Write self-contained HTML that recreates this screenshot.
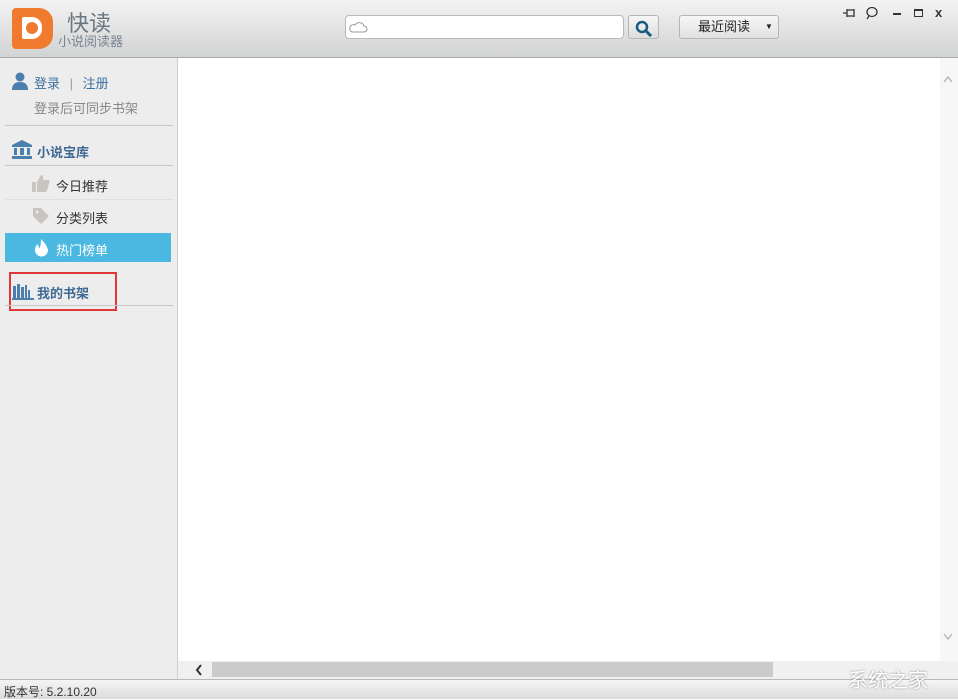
<!DOCTYPE html><html><head><meta charset="utf-8"><style>
*{margin:0;padding:0;box-sizing:border-box}
body{width:958px;height:699px;overflow:hidden;position:relative;font-family:"Liberation Sans","Noto Sans CJK SC",sans-serif;font-size:12px;background:#fff}
.a{position:absolute}
#hd{left:0;top:0;width:958px;height:58px;background:linear-gradient(#f3f3f3,#d2d3d4);border-bottom:1px solid #a9abad}
#sb{left:0;top:58px;width:178px;height:621px;background:#ededed;border-right:1px solid #cfcfcf}
.ln{height:1px;background:#c8c8c8;left:5px;width:168px}
.t{color:#333;font-size:13px}
</style></head><body>
<div id="hd" class="a">
 <div class="a" style="left:12px;top:8px;width:41px;height:41px;background:#f07a2e;border-radius:4px 14px 14px 4px"></div>
 <div class="a" style="left:22px;top:17px;width:20px;height:22px;background:#fff;border-radius:2px 10px 10px 2px"></div>
 <div class="a" style="left:26px;top:22px;width:12px;height:12px;background:#f07a2e;border-radius:50%"></div>
 <div class="a" style="left:67px;top:6px;font-size:22px;color:#6b7780">快读</div>
 <div class="a" style="left:58px;top:31px;font-size:13px;color:#7a8590">小说阅读器</div>
 <div class="a" style="left:345px;top:15px;width:279px;height:24px;background:#fff;border:1px solid #b9b9b9;border-radius:4px"></div>
 <svg class="a" style="left:348px;top:20px" width="20" height="14"><path d="M4 12h12a3 3 0 0 0 0-6a5 5 0 0 0-9-1a3.5 3.5 0 0 0-3 7z" fill="none" stroke="#999"/></svg>
 <div class="a" style="left:628px;top:15px;width:31px;height:24px;background:linear-gradient(#f7f7f7,#ddd);border:1px solid #b5b5b5;border-radius:3px"></div>
 <svg class="a" style="left:634px;top:19px" width="20" height="18"><circle cx="8" cy="8" r="5" fill="none" stroke="#1a5a82" stroke-width="2.5"/><path d="M12 12l5 5" stroke="#1a5a82" stroke-width="3"/></svg>
 <div class="a" style="left:679px;top:15px;width:100px;height:24px;background:linear-gradient(#f7f7f7,#e0e0e0);border:1px solid #b5b5b5;border-radius:3px;font-size:13px;color:#222;line-height:22px;padding-left:18px">最近阅读<span style="position:absolute;left:85px;font-size:8px">▼</span></div>
 <svg class="a" style="left:842px;top:7px" width="14" height="12"><path d="M1 6h4M5 2v8M5 3h7v6H5M12 2v8" fill="none" stroke="#333" stroke-width="1.3"/></svg>
 <svg class="a" style="left:865px;top:6px" width="14" height="14"><ellipse cx="7" cy="6" rx="5" ry="4.5" fill="none" stroke="#333" stroke-width="1.3"/><path d="M4 10l-2 3" stroke="#333" stroke-width="1.3"/></svg>
 <div class="a" style="left:893px;top:13px;width:8px;height:2px;background:#333"></div>
 <div class="a" style="left:914px;top:9px;width:9px;height:8px;border:1.5px solid #333;border-top-width:2.5px"></div>
 <div class="a" style="left:935px;top:5px;font-size:13px;font-weight:bold;color:#333">x</div>
</div>
<div id="sb" class="a"></div>
<svg class="a" style="left:12px;top:72px" width="16" height="18"><circle cx="8" cy="5" r="4.5" fill="#4a7fae"/><path d="M0 18q0-8 8-8t8 8z" fill="#4a7fae"/></svg>
<div class="a" style="left:34px;top:73px;font-size:13px;color:#3f6fa0">登录 <span style="color:#999;margin:0 6px">|</span> 注册</div>
<div class="a" style="left:34px;top:98px;font-size:13px;color:#888">登录后可同步书架</div>
<div class="a ln" style="top:125px"></div>
<svg class="a" style="left:12px;top:140px" width="20" height="19"><path d="M10 0L0 5v2h20V5z M2 8h3v7H2z M8 8h4v7H8z M15 8h3v7h-3z M0 16h20v3H0z" fill="#4a7fae"/></svg>
<div class="a" style="left:37px;top:142px;font-size:13px;font-weight:bold;color:#3f6a94">小说宝库</div>
<div class="a ln" style="top:165px"></div>
<svg class="a" style="left:32px;top:175px" width="18" height="17"><path d="M0 7h4v10H0z M5 7l4-7q3 0 2 5h6q1 1 0 3l-2 8q-1 1-2 1H5z" fill="#c8c4c0"/></svg>
<div class="a t" style="left:56px;top:176px">今日推荐</div>
<div class="a ln" style="top:199px;background:#e0e0e0"></div>
<svg class="a" style="left:32px;top:207px" width="18" height="18"><path d="M1 1h8l8 8-8 8-8-8z" fill="#c8c4c0"/><circle cx="5" cy="5" r="1.5" fill="#ededed"/></svg>
<div class="a t" style="left:56px;top:208px">分类列表</div>
<div class="a" style="left:5px;top:233px;width:166px;height:29px;background:#4bb8e2"></div>
<svg class="a" style="left:34px;top:239px" width="15" height="18"><path d="M7 0q6 6 7 11a6.5 6.5 0 0 1-13 0q0-4 3-6q0 3 2 4q1-4 1-9z" fill="#fff"/></svg>
<div class="a" style="left:56px;top:240px;font-size:13px;color:#fff">热门榜单</div>
<svg class="a" style="left:12px;top:282px" width="22" height="18"><path d="M1 4h3v12H1zM5 2h3v14H5zM9 5h3v11H9zM13 3h2v13h-2z M16 8h2v8h-2z M0 16h22v2H0z" fill="#4a7fae"/></svg>
<div class="a" style="left:37px;top:283px;font-size:13px;font-weight:bold;color:#3f6a94">我的书架</div>
<div class="a" style="left:9px;top:272px;width:108px;height:39px;border:2px solid #e0383a"></div>
<div class="a ln" style="top:305px"></div>
<div class="a" style="left:940px;top:58px;width:18px;height:603px;background:#f7f7f7"></div>
<svg class="a" style="left:943px;top:75px" width="10" height="8"><path d="M1 7l4-5 4 5" fill="none" stroke="#bbb" stroke-width="1.5"/></svg>
<svg class="a" style="left:943px;top:633px" width="10" height="8"><path d="M1 1l4 5 4-5" fill="none" stroke="#bbb" stroke-width="1.5"/></svg>
<div class="a" style="left:178px;top:661px;width:780px;height:18px;background:#f0f0f0"></div>
<svg class="a" style="left:195px;top:664px" width="8" height="12"><path d="M6 1L2 6l4 5" fill="none" stroke="#333" stroke-width="2"/></svg>
<div class="a" style="left:212px;top:662px;width:561px;height:15px;background:#cbcbcb"></div>
<div class="a" style="left:0;top:679px;width:958px;height:20px;background:linear-gradient(#f5f5f5,#dcdcdc);border-top:1px solid #b8b8b8;font-size:12px;color:#333;padding:3px 0 0 4px">版本号: 5.2.10.20</div>
<div class="a" style="left:848px;top:664px;color:#fff;font-size:20px;text-shadow:0 0 2px #888">系统之家</div>
</body></html>
